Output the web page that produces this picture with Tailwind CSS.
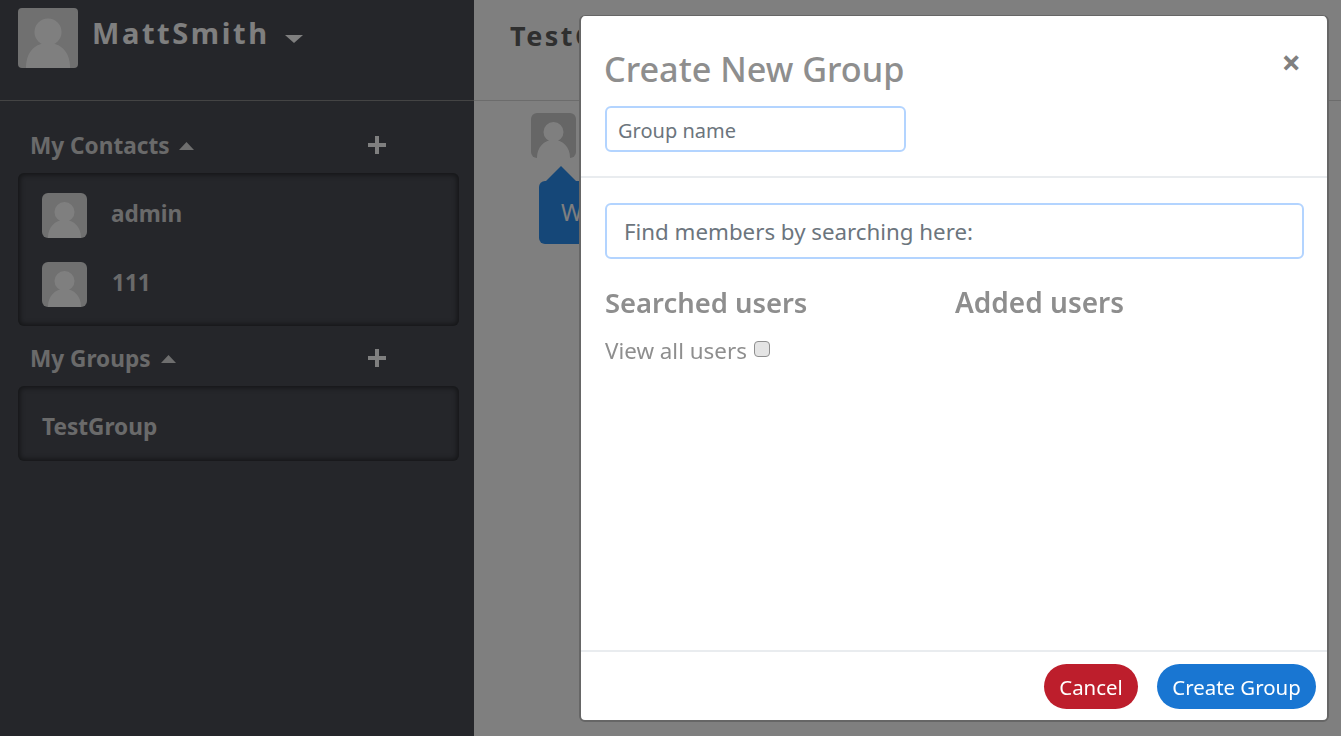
<!DOCTYPE html>
<html lang="en">
  <head>
    <meta charset="UTF-8" />
    <title>Create New Group</title>
    <script src="https://cdn.jsdelivr.net/npm/@tailwindcss/browser@4"></script>
  </head>
  <body class="overflow-hidden font-['Noto_Sans',sans-serif]">
    <div class="flex h-[736px] bg-white">
      <!-- sidebar -->
      <aside class="w-[474px] shrink-0 bg-[#4a4c54] text-[#d4d4d4]">
        <div class="flex h-[101px] border-b border-[#888888] pl-[18px] pt-2">
          <svg class="size-[60px] rounded bg-[#e0e0e0]" viewBox="0 0 60 60"><circle cx="30" cy="24" r="13.5" fill="#fff"/><path d="M8 60c0-16 9-25 22-25s22 9 22 25z" fill="#fff"/></svg>
          <span class="ml-3.5 mt-[5px] text-[29px] leading-10 font-bold tracking-[2.6px] text-white">MattSmith</span>
          <svg class="ml-[15px] mt-[27px] h-[8px] w-[18px]" viewBox="0 0 18 8"><path d="M0 0h18l-9 8z" fill="#fff"/></svg>
        </div>

        <div class="flex h-[72px] items-start pl-[30px] pt-[27px]">
          <span class="flex w-[338px] items-center text-[22.6px] leading-9 font-bold">My Contacts <svg class="ml-[9px] h-[8px] w-[15px]" viewBox="0 0 15 8"><path d="M0 8h15L7.5 0z" fill="#ddd"/></svg></span>
          <svg class="mt-2 size-[18px]" viewBox="0 0 18 18"><path d="M9 0v18M0 9h18" stroke="#fff" stroke-width="4"/></svg>
        </div>
        <div class="ml-[18px] mr-[15px] h-[153px] rounded-md bg-[#4a4c54] px-6 pt-[21px] shadow-[inset_0_0_5px_2px_rgba(0,0,0,0.45)]">
          <div class="-mt-px flex h-[69px] items-start">
            <svg class="size-[45px] rounded-md bg-[#e0e0e0]" viewBox="0 0 45 45"><circle cx="22.500" cy="19" r="10" fill="#fff"/><path d="M6 45c0-11 7-18 16.500-18S39 34 39 45z" fill="#fff"/></svg>
            <span class="ml-6 mt-px text-[22.6px] leading-10 font-bold">admin</span>
          </div>
          <div class="flex h-[69px] items-start">
            <svg class="size-[45px] rounded-md bg-[#e0e0e0]" viewBox="0 0 45 45"><circle cx="22.500" cy="19" r="10" fill="#fff"/><path d="M6 45c0-11 7-18 16.500-18S39 34 39 45z" fill="#fff"/></svg>
            <span class="ml-[25px] mt-px text-[22.6px] leading-10 font-bold">111</span>
          </div>
        </div>

        <div class="flex h-[60px] items-start pl-[30px] pt-[15px]">
          <span class="flex w-[338px] items-center text-[22.6px] leading-9 font-bold">My Groups <svg class="ml-[10px] h-[8px] w-[15px]" viewBox="0 0 15 8"><path d="M0 8h15L7.5 0z" fill="#ddd"/></svg></span>
          <svg class="mt-2 size-[18px]" viewBox="0 0 18 18"><path d="M9 0v18M0 9h18" stroke="#fff" stroke-width="4"/></svg>
        </div>
        <div class="ml-[18px] mr-[15px] flex h-[75px] items-center rounded-md bg-[#4a4c54] px-6 pt-1.5 shadow-[inset_0_0_5px_2px_rgba(0,0,0,0.45)]">
          <span class="text-[22.6px] leading-10 font-bold">TestGroup</span>
        </div>
      </aside>

      <!-- chat behind the modal -->
      <main class="flex-1">
        <div class="h-[101px] border-b border-[#d8d8d8] pl-9 pt-4">
          <span class="text-[27px] leading-10 font-bold tracking-[2.5px] text-[#5f5f5f]">TestGroup</span>
        </div>
        <div class="pl-[57px] pt-3">
          <svg class="size-[45px] rounded-md bg-[#cccccc]" viewBox="0 0 45 45"><circle cx="22.500" cy="19" r="10" fill="#fff"/><path d="M6 45c0-11 7-18 16.500-18S39 34 39 45z" fill="#fff"/></svg>
          <div class="relative ml-2 mt-[23px] h-[63px] w-[200px] rounded-md bg-[#2a8ef0] pl-[22px] pt-3.5 text-[23px] text-white">
            <div class="absolute -top-[15px] left-[7px] size-0 border-x-[15px] border-b-[15px] border-x-transparent border-b-[#2a8ef0]"></div>
            Welcome
          </div>
        </div>
      </main>
    </div>

    <!-- backdrop + modal -->
    <div class="fixed inset-0 bg-black/50 pl-[579px] pt-[15px]">
      <div class="flex h-[707px] w-[750px] flex-col rounded-md border-2 border-t border-[#666666] bg-white text-[#8e8e8e]">
        <div class="relative h-[162px] border-b-2 border-[#e9ecef] px-6 pt-7">
          <h4 class="-ml-px text-[34.2px] leading-[50px] font-medium">Create New Group</h4>
          <input class="mt-3 block h-[46px] w-[301px] rounded-md border-2 border-[#b3d4ff] px-[11px] pt-[3px] text-[20px] outline-none placeholder:text-[#6c757d]" placeholder="Group name" />
          <span class="absolute right-[26px] top-[26px] text-[34px] leading-10 font-bold text-[#808080]">×</span>
        </div>

        <div class="flex-1 px-6 pt-[25px]">
          <input class="block h-[56px] w-[699px] rounded-md border-2 border-[#b3d4ff] px-[17px] text-[22.3px] outline-none placeholder:text-[#6c757d]" placeholder="Find members by searching here:" />
          <div class="mt-6 grid grid-cols-2">
            <div>
              <h5 class="text-[27.4px] leading-10 font-semibold">Searched users</h5>
              <label class="mt-3 flex items-center gap-[7px] text-[22.4px] leading-8">View all users
                <span class="mb-1 inline-block size-[16px] rounded-[4px] border border-[#8f8f8f] bg-[#e4e4e4]"></span>
              </label>
            </div>
            <div class="pl-px">
              <h5 class="-mt-px text-[28px] leading-10 font-semibold">Added users</h5>
            </div>
          </div>
        </div>

        <div class="flex h-[70px] items-start justify-end gap-[19px] border-t-2 border-[#e9ecef] pr-[11px] pt-3">
          <button class="h-[45px] w-[94px] rounded-full bg-[#bd1e2c] pt-0.5 text-[20.4px] text-white">Cancel</button>
          <button class="h-[45px] w-[159px] rounded-full bg-[#1976d2] pt-0.5 text-[20.4px] text-white">Create Group</button>
        </div>
      </div>
    </div>
  </body>
</html>
